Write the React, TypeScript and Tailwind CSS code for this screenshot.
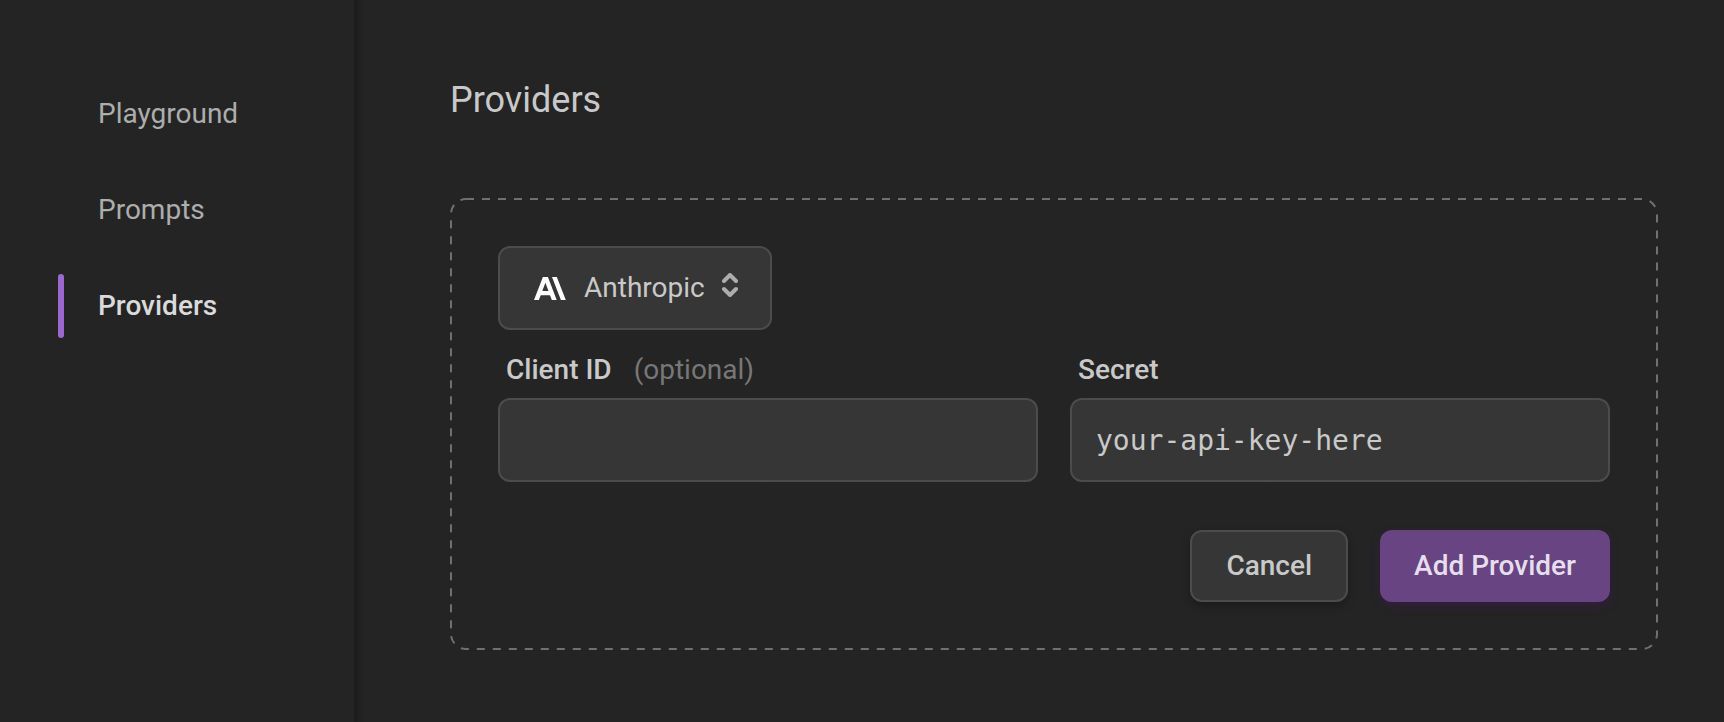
import { useState } from "react";

const navItems = ["Playground", "Prompts", "Providers"];
const providers = ["Anthropic", "OpenAI", "Cohere"];

const fieldClass =
  "h-[84px] w-full rounded-xl border-2 border-[#4c4c4c] bg-[#363636] px-6 text-[28px] text-[#c9c9c9] outline-none";

function AnthropicLogo() {
  return (
    <svg
      aria-hidden="true"
      viewBox="0 0 32 23"
      className="pointer-events-none ml-9 h-[23px] w-8 self-center justify-self-start [grid-area:1/1]"
      fill="#ffffff"
    >
      <path
        fillRule="evenodd"
        d="M8.9 0h5l8.8 23h-4.9l-1.8-4.8H6.7L4.9 23H0L8.9 0Zm2.5 5.8L8.3 14h6.2l-3.1-8.2Z"
      />
      <path d="M18 0h4.8l9 23h-4.9L18 0Z" />
    </svg>
  );
}

function SortChevrons() {
  return (
    <svg
      aria-hidden="true"
      viewBox="0 0 16 24"
      className="pointer-events-none mr-[34px] mb-1.5 h-6 w-4 self-center justify-self-end [grid-area:1/1]"
      fill="none"
      stroke="#adadad"
      strokeWidth="4"
      strokeLinecap="round"
      strokeLinejoin="round"
    >
      <path d="M2 8l6-6 6 6" />
      <path d="M2 16l6 6 6-6" />
    </svg>
  );
}

function DashedOutline() {
  return (
    <svg
      aria-hidden="true"
      className="pointer-events-none absolute inset-0 h-full w-full overflow-visible p-px"
    >
      <rect
        width="100%"
        height="100%"
        rx="15"
        fill="none"
        stroke="#707070"
        strokeWidth="2"
        strokeDasharray="8 8"
      />
    </svg>
  );
}

export default function App() {
  const [provider, setProvider] = useState("Anthropic");
  const [clientId, setClientId] = useState("");
  const [secret, setSecret] = useState("your-api-key-here");

  return (
    <div className="flex min-h-screen bg-[#242424] font-['Roboto',sans-serif] text-[28px] leading-8 text-[#c9c9c9]">
      <aside className="w-[354px] shrink-0 pt-[82px] pl-[58px]">
        <nav className="flex flex-col gap-8">
          {navItems.map((item) => {
            const active = item === "Providers";
            return (
              <a
                key={item}
                href={`#${item.toLowerCase()}`}
                aria-current={active ? "page" : undefined}
                className={
                  active
                    ? "flex h-16 items-center gap-[34px] font-medium text-[#dadada]"
                    : "flex h-16 items-center gap-[34px] text-[#adadad]"
                }
              >
                <span
                  className={
                    active
                      ? "h-16 w-[6px] rounded-full bg-[#9d68cb]"
                      : "h-16 w-[6px]"
                  }
                />
                {item}
              </a>
            );
          })}
        </nav>
      </aside>

      <main className="min-w-0 flex-1 bg-linear-to-r from-[#1b1b1b] to-[#242424] to-[10px] pt-20 pr-[66px] pb-[72px] pl-24">
        <h1 className="text-[36px] leading-10 font-normal">Providers</h1>

        <form
          className="relative mt-[78px] p-12"
          onSubmit={(event) => event.preventDefault()}
        >
          <DashedOutline />

          <div className="inline-grid h-[84px] w-[274px] align-top">
            <select
              aria-label="Provider"
              value={provider}
              onChange={(event) => setProvider(event.target.value)}
              className="appearance-none rounded-xl border-2 border-[#4c4c4c] bg-[#363636] pr-14 pl-[84px] outline-none [grid-area:1/1]"
            >
              {providers.map((name) => (
                <option key={name}>{name}</option>
              ))}
            </select>
            <AnthropicLogo />
            <SortChevrons />
          </div>

          <div className="mt-6 grid grid-cols-2 gap-8">
            <div>
              <label
                htmlFor="client-id"
                className="mb-3 flex gap-[22px] px-2 font-medium"
              >
                Client ID
                <span className="font-normal text-[#777777]">(optional)</span>
              </label>
              <input
                id="client-id"
                type="text"
                value={clientId}
                onChange={(event) => setClientId(event.target.value)}
                className={fieldClass}
              />
            </div>
            <div>
              <label
                htmlFor="secret"
                className="mb-3 flex px-2 font-medium"
              >
                Secret
              </label>
              <input
                id="secret"
                type="text"
                value={secret}
                onChange={(event) => setSecret(event.target.value)}
                className={`${fieldClass} font-['DejaVu_Sans_Mono',monospace]`}
              />
            </div>
          </div>

          <div className="mt-12 flex justify-end gap-8 font-medium">
            <button
              type="button"
              className="h-[72px] rounded-xl border-2 border-[#4c4c4c] bg-[#363636] px-[34px] shadow-[0_4px_8px_#00000040]"
            >
              Cancel
            </button>
            <button
              type="submit"
              className="h-[72px] rounded-xl bg-[#684483] px-[34px] text-[#e6deec] shadow-[0_4px_8px_#3d195780]"
            >
              Add Provider
            </button>
          </div>
        </form>
      </main>
    </div>
  );
}
